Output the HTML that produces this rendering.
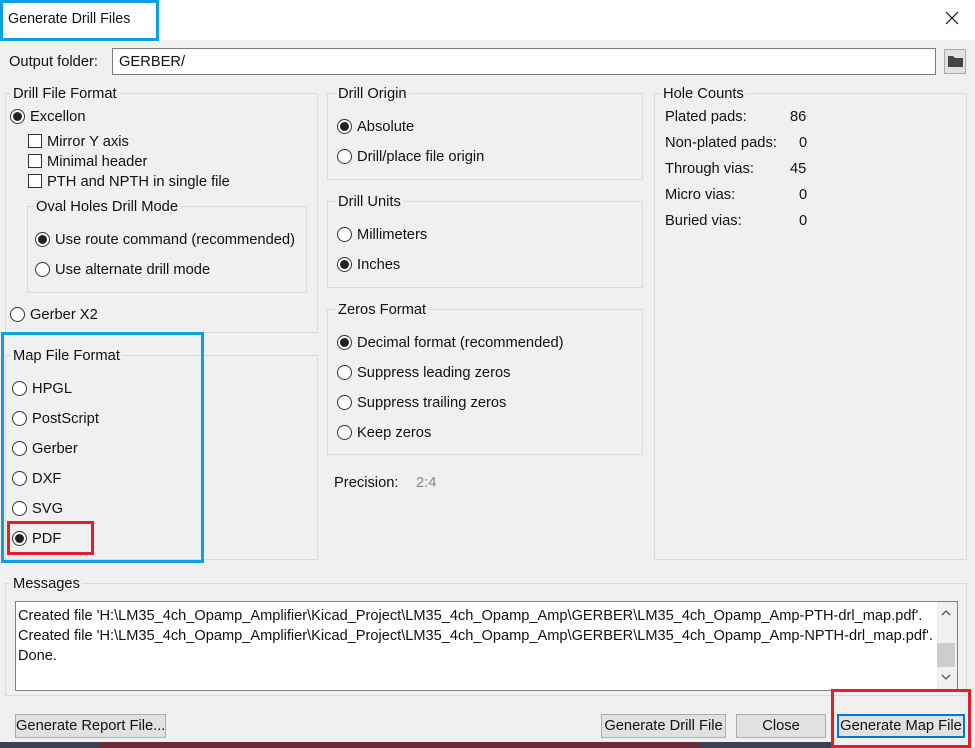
<!DOCTYPE html>
<html><head><meta charset="utf-8"><style>
*{box-sizing:border-box;margin:0;padding:0}
body{width:975px;height:748px;background:#f0f0f0;position:relative;overflow:hidden;font-family:"Liberation Sans",sans-serif;font-size:14.7px;color:#111}
.a{position:absolute}
.t{position:absolute;line-height:16px;white-space:nowrap}
.g{position:absolute;border:1px solid #dadada}
.gl{position:absolute;background:#f0f0f0;padding:0 2px;line-height:16px;white-space:nowrap}
.r{position:absolute;width:15px;height:15px;border:1px solid #333;border-radius:50%;background:#fff}
.r.on::after{content:"";position:absolute;left:2px;top:2px;width:9px;height:9px;border-radius:50%;background:#222}
.c{position:absolute;width:14px;height:14px;border:1px solid #333;background:#fff}
.btn{position:absolute;height:24px;border:1px solid #adadad;background:#e1e1e1;text-align:center;line-height:22px;white-space:nowrap}
</style></head><body>
<div class="a" style="left:0;top:0;width:975px;height:40px;background:#fff"></div>
<div class="t" style="left:8px;top:11px;font-size:14.3px">Generate Drill Files</div>
<div class="a" style="left:0;top:0;width:159px;height:41px;border:3px solid #0ea0dc"></div>
<svg class="a" style="left:945px;top:11px" width="14" height="14"><path d="M1 1L13 13M13 1L1 13" stroke="#111" stroke-width="1.2"/></svg>

<div class="t" style="left:9px;top:54px">Output folder:</div>
<div class="a" style="left:112px;top:48px;width:824px;height:27px;background:#fff;border:1px solid #7a7a7a"></div>
<div class="t" style="left:119px;top:54px">GERBER/</div>
<div class="a" style="left:944px;top:49px;width:22px;height:25px;background:#e1e1e1;border:1px solid #adadad"></div>
<svg class="a" style="left:948px;top:55px" width="15" height="12"><path d="M0 1h5l2 2h8v9H0z" fill="#444"/></svg>

<!-- Drill file format -->
<div class="g" style="left:5px;top:93px;width:313px;height:240px"></div>
<div class="gl" style="left:11px;top:86px">Drill File Format</div>
<div class="r on" style="left:10px;top:109px"></div><div class="t" style="left:30px;top:109px">Excellon</div>
<div class="c" style="left:28px;top:134px"></div><div class="t" style="left:47px;top:134px">Mirror Y axis</div>
<div class="c" style="left:28px;top:154px"></div><div class="t" style="left:47px;top:154px">Minimal header</div>
<div class="c" style="left:28px;top:174px"></div><div class="t" style="left:47px;top:174px">PTH and NPTH in single file</div>
<div class="g" style="left:27px;top:206px;width:280px;height:87px"></div>
<div class="gl" style="left:34px;top:199px">Oval Holes Drill Mode</div>
<div class="r on" style="left:35px;top:232px"></div><div class="t" style="left:55px;top:232px">Use route command (recommended)</div>
<div class="r" style="left:35px;top:262px"></div><div class="t" style="left:55px;top:262px">Use alternate drill mode</div>
<div class="r" style="left:10px;top:307px"></div><div class="t" style="left:30px;top:307px">Gerber X2</div>

<!-- Map file format -->
<div class="g" style="left:5px;top:355px;width:313px;height:205px"></div>
<div class="gl" style="left:11px;top:348px">Map File Format</div>
<div class="r" style="left:12px;top:381px"></div><div class="t" style="left:32px;top:381px">HPGL</div>
<div class="r" style="left:12px;top:411px"></div><div class="t" style="left:32px;top:411px">PostScript</div>
<div class="r" style="left:12px;top:441px"></div><div class="t" style="left:32px;top:441px">Gerber</div>
<div class="r" style="left:12px;top:471px"></div><div class="t" style="left:32px;top:471px">DXF</div>
<div class="r" style="left:12px;top:501px"></div><div class="t" style="left:32px;top:501px">SVG</div>
<div class="r on" style="left:12px;top:531px"></div><div class="t" style="left:32px;top:531px">PDF</div>
<div class="a" style="left:1px;top:332px;width:203px;height:231px;border:3px solid #0ea0dc"></div>
<div class="a" style="left:7px;top:521px;width:87px;height:34px;border:3px solid #e0202a"></div>

<!-- middle -->
<div class="g" style="left:327px;top:93px;width:316px;height:87px"></div>
<div class="gl" style="left:336px;top:86px">Drill Origin</div>
<div class="r on" style="left:337px;top:119px"></div><div class="t" style="left:357px;top:119px">Absolute</div>
<div class="r" style="left:337px;top:149px"></div><div class="t" style="left:357px;top:149px">Drill/place file origin</div>

<div class="g" style="left:327px;top:201px;width:316px;height:87px"></div>
<div class="gl" style="left:336px;top:194px">Drill Units</div>
<div class="r" style="left:337px;top:227px"></div><div class="t" style="left:357px;top:227px">Millimeters</div>
<div class="r on" style="left:337px;top:257px"></div><div class="t" style="left:357px;top:257px">Inches</div>

<div class="g" style="left:327px;top:309px;width:316px;height:146px"></div>
<div class="gl" style="left:336px;top:302px">Zeros Format</div>
<div class="r on" style="left:337px;top:335px"></div><div class="t" style="left:357px;top:335px">Decimal format (recommended)</div>
<div class="r" style="left:337px;top:365px"></div><div class="t" style="left:357px;top:365px">Suppress leading zeros</div>
<div class="r" style="left:337px;top:395px"></div><div class="t" style="left:357px;top:395px">Suppress trailing zeros</div>
<div class="r" style="left:337px;top:425px"></div><div class="t" style="left:357px;top:425px">Keep zeros</div>
<div class="t" style="left:334px;top:475px">Precision:</div>
<div class="t" style="left:416px;top:475px;color:#888">2:4</div>

<!-- hole counts -->
<div class="g" style="left:654px;top:93px;width:313px;height:467px"></div>
<div class="gl" style="left:661px;top:86px">Hole Counts</div>
<div class="t" style="left:665px;top:109px">Plated pads:</div><div class="t" style="left:790px;top:109px">86</div>
<div class="t" style="left:665px;top:135px">Non-plated pads:</div><div class="t" style="left:799px;top:135px">0</div>
<div class="t" style="left:665px;top:161px">Through vias:</div><div class="t" style="left:790px;top:161px">45</div>
<div class="t" style="left:665px;top:187px">Micro vias:</div><div class="t" style="left:799px;top:187px">0</div>
<div class="t" style="left:665px;top:213px">Buried vias:</div><div class="t" style="left:799px;top:213px">0</div>

<!-- messages -->
<div class="g" style="left:5px;top:583px;width:962px;height:113px"></div>
<div class="gl" style="left:11px;top:576px">Messages</div>
<div class="a" style="left:15px;top:601px;width:943px;height:90px;background:#fff;border:1px solid #828282"></div>
<div class="t" style="left:18px;top:606px;font-size:14.6px;line-height:20px">Created file 'H:\LM35_4ch_Opamp_Amplifier\Kicad_Project\LM35_4ch_Opamp_Amp\GERBER\LM35_4ch_Opamp_Amp-PTH-drl_map.pdf'.<br>Created file 'H:\LM35_4ch_Opamp_Amplifier\Kicad_Project\LM35_4ch_Opamp_Amp\GERBER\LM35_4ch_Opamp_Amp-NPTH-drl_map.pdf'.<br>Done.</div>
<div class="a" style="left:937px;top:602px;width:20px;height:88px;background:#f0f0f0"></div>
<div class="a" style="left:937px;top:643px;width:18px;height:24px;background:#cdcdcd"></div>
<svg class="a" style="left:941px;top:609px" width="10" height="7"><path d="M1 6L5 2L9 6" stroke="#555" fill="none" stroke-width="1.3"/></svg>
<svg class="a" style="left:941px;top:674px" width="10" height="7"><path d="M1 1L5 5L9 1" stroke="#555" fill="none" stroke-width="1.3"/></svg>

<!-- buttons -->
<div class="btn" style="left:15px;top:714px;width:151px">Generate Report File...</div>
<div class="btn" style="left:601px;top:714px;width:125px">Generate Drill File</div>
<div class="btn" style="left:736px;top:714px;width:90px">Close</div>
<div class="btn" style="left:837px;top:714px;width:128px;border:2px solid #0078d7;line-height:20px">Generate Map File</div>
<div class="a" style="left:831px;top:689px;width:140px;height:59px;border:3px solid #e0202a"></div>
<div class="a" style="left:0;top:742px;width:831px;height:6px;background:#3b3f5a"></div>
<div class="a" style="left:100px;top:742px;width:600px;height:6px;background:#6b2a35"></div>
</body></html>
